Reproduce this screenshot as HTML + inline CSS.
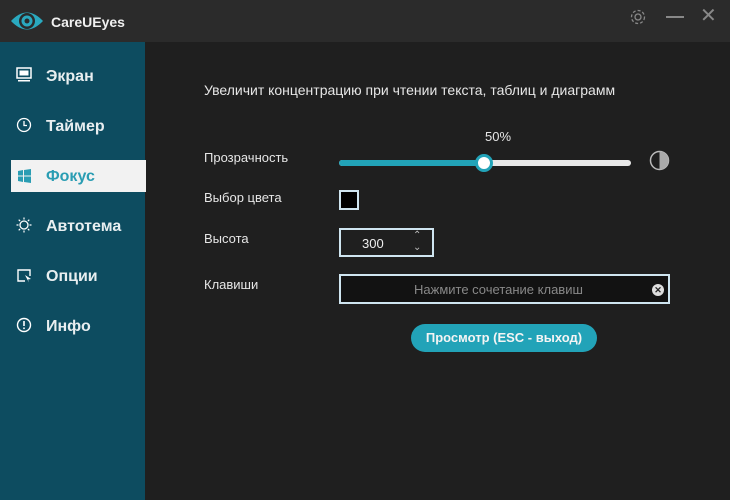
<!DOCTYPE html><html><head><meta charset="utf-8"><style>
*{margin:0;padding:0;box-sizing:border-box}
body{width:730px;height:500px;background:#1f1f1f;font-family:"Liberation Sans",sans-serif;position:relative;overflow:hidden;color:#ddd}
.t{position:absolute}
#title{left:0;top:0;width:730px;height:42px;background:#2b2b2b}
#side{left:0;top:42px;width:145px;height:458px;background:#0d4c60}
.nav{position:absolute;left:46px;font-size:16px;font-weight:bold;color:#e8eef0}
.ic{position:absolute;left:16px}
.lbl{position:absolute;left:204px;font-size:13px;color:#e6e6e6}
</style></head><body>
<div class="t" id="title"></div>
<svg class="t" style="left:10px;top:8px" width="34" height="26" viewBox="0 0 34 26"><path d="M1 13 Q17 -4 33 13 Q17 30 1 13Z" fill="#2aa9bf"/><circle cx="17" cy="13" r="8" fill="#2b2b2b"/><circle cx="17" cy="13" r="5.5" fill="#2aa9bf"/><circle cx="17" cy="13" r="2.5" fill="#2b2b2b"/></svg>
<div class="t" style="left:51px;top:14px;font-size:14px;font-weight:bold;color:#f0f0f0">CareUEyes</div>
<svg class="t" style="left:629px;top:8px" width="18" height="18" viewBox="0 0 18 18"><circle cx="9" cy="9" r="3" fill="none" stroke="#888" stroke-width="1.3"/><circle cx="9" cy="9" r="6.5" fill="none" stroke="#888" stroke-width="1.3" stroke-dasharray="3 2"/></svg>
<div class="t" style="left:666px;top:16px;width:18px;height:1.5px;background:#888"></div>
<div class="t" style="left:700px;top:3px;font-size:20px;color:#888">✕</div>
<div class="t" id="side"></div>
<div class="t" style="left:11px;top:160px;width:135px;height:32px;background:#f2f2f2"></div>
<svg class="ic" style="top:66px" width="16" height="16"><rect x="1" y="2" width="14" height="10" fill="none" stroke="#fff" stroke-width="1.5"/><rect x="3.5" y="4.5" width="9" height="5" fill="#fff"/><rect x="2" y="14" width="12" height="1.5" fill="#fff"/></svg>
<div class="nav" style="top:68px">Экран</div>
<svg class="ic" style="top:117px" width="16" height="16"><circle cx="8" cy="8" r="6.5" fill="none" stroke="#fff" stroke-width="1.3"/><path d="M8 4V8.5H11" fill="none" stroke="#fff" stroke-width="1.3"/></svg>
<div class="nav" style="top:118px">Таймер</div>
<svg class="ic" style="top:168px" width="16" height="16"><path d="M2 3L7 2V7.5H2ZM8 2L15 1V7.5H8ZM2 8.5H7V14L2 13ZM8 8.5H15V15L8 14Z" fill="#2a9db3"/></svg>
<div class="nav" style="top:168px;color:#2a9db3">Фокус</div>
<svg class="ic" style="top:217px" width="16" height="16"><circle cx="8" cy="8" r="4" fill="none" stroke="#fff" stroke-width="1.3"/><path d="M8 0.5v2M8 13.5v2M0.5 8h2M13.5 8h2M2.7 2.7l1.4 1.4M11.9 11.9l1.4 1.4M2.7 13.3l1.4-1.4M11.9 4.1l1.4-1.4" stroke="#fff" stroke-width="1.2"/></svg>
<div class="nav" style="top:218px">Автотема</div>
<svg class="ic" style="top:267px" width="16" height="16"><path d="M9 14H2V3H14V9" fill="none" stroke="#fff" stroke-width="1.4"/><path d="M9 8L15 12L12 12.5L13 15.5L10 10Z" fill="#fff"/></svg>
<div class="nav" style="top:268px">Опции</div>
<svg class="ic" style="top:317px" width="16" height="16"><circle cx="8" cy="8" r="6.5" fill="none" stroke="#fff" stroke-width="1.4"/><rect x="7.2" y="4" width="1.6" height="5" fill="#fff"/><rect x="7.2" y="10.5" width="1.6" height="1.6" fill="#fff"/></svg>
<div class="nav" style="top:318px">Инфо</div>
<div class="t" style="left:204px;top:82px;font-size:14px;color:#e6e6e6">Увеличит концентрацию при чтении текста, таблиц и диаграмм</div>
<div class="t" style="left:485px;top:129px;font-size:13px;color:#e6e6e6">50%</div>
<div class="lbl" style="top:150px">Прозрачность</div>
<div class="t" style="left:339px;top:160px;width:292px;height:6px;border-radius:3px;background:#e8e8e8"></div>
<div class="t" style="left:339px;top:160px;width:145px;height:6px;border-radius:3px;background:#22a3b8"></div>
<div class="t" style="left:475px;top:154px;width:18px;height:18px;border-radius:50%;background:#fff;border:3px solid #22a3b8"></div>
<svg class="t" style="left:649px;top:150px" width="21" height="21"><circle cx="10.5" cy="10.5" r="9" fill="#1f1f1f" stroke="#bbb" stroke-width="1.5"/><path d="M10.5 1.5A9 9 0 0 1 10.5 19.5Z" fill="#aaa"/></svg>
<div class="lbl" style="top:190px">Выбор цвета</div>
<div class="t" style="left:339px;top:190px;width:20px;height:20px;background:#000;border:2px solid #cfe5f0"></div>
<div class="lbl" style="top:231px">Высота</div>
<div class="t" style="left:339px;top:228px;width:95px;height:29px;border:2px solid #cfe5f0;background:#1f1f1f"></div>
<div class="t" style="left:362px;top:236px;font-size:13px;color:#eee">300</div>
<div class="t" style="left:413px;top:230px;font-size:10px;color:#bbb;line-height:12px">⌃<br>⌄</div>
<div class="lbl" style="top:277px">Клавиши</div>
<div class="t" style="left:339px;top:274px;width:331px;height:30px;border:2px solid #cfe5f0;background:#121212"></div>
<div class="t" style="left:414px;top:282px;font-size:13px;color:#888">Нажмите сочетание клавиш</div>
<div class="t" style="left:652px;top:284px;width:12px;height:12px;border-radius:50%;background:#ddd;color:#222;font-size:9px;text-align:center;line-height:12px;font-weight:bold">✕</div>
<div class="t" style="left:411px;top:324px;width:186px;height:28px;border-radius:14px;background:#22a3b8;color:#f4f4f4;font-size:13px;font-weight:bold;text-align:center;line-height:28px">Просмотр (ESC - выход)</div>
</body></html>
